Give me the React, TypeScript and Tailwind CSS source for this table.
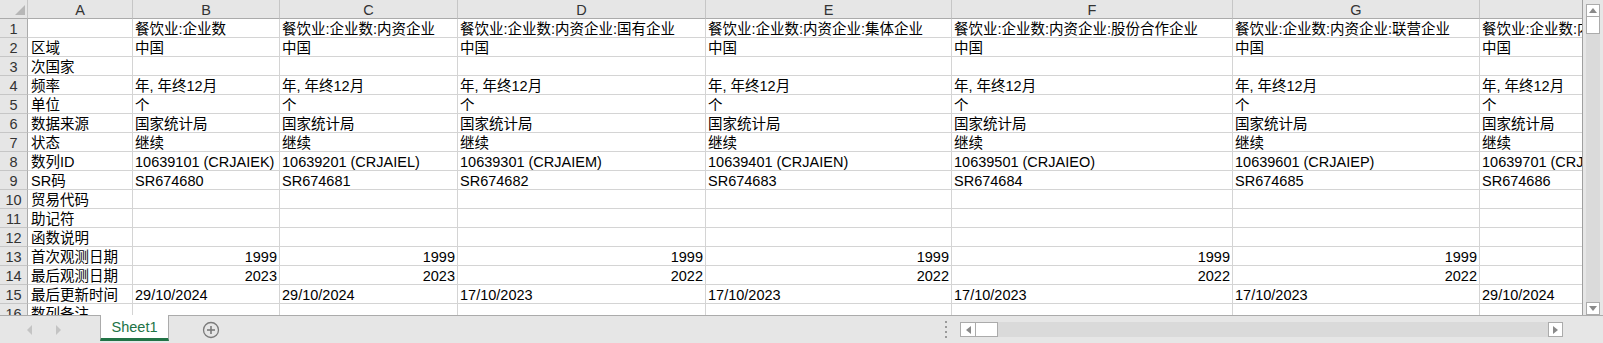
import React from "react";

const widths = [105, 147, 178, 248, 246, 281, 247, 320];
const letters = ["A", "B", "C", "D", "E", "F", "G", "H"];

type Cell = string | { v: string; r: true };

const cols = ["B", "C", "D", "E", "F", "G", "H"];
const names = [
  "餐饮业:企业数",
  "餐饮业:企业数:内资企业",
  "餐饮业:企业数:内资企业:国有企业",
  "餐饮业:企业数:内资企业:集体企业",
  "餐饮业:企业数:内资企业:股份合作企业",
  "餐饮业:企业数:内资企业:联营企业",
  "餐饮业:企业数:内资企业:私营企业",
];
const ids = ["10639101 (CRJAIEK)", "10639201 (CRJAIEL)", "10639301 (CRJAIEM)", "10639401 (CRJAIEN)", "10639501 (CRJAIEO)", "10639601 (CRJAIEP)", "10639701 (CRJAIEQ)"];
const srs = ["SR674680", "SR674681", "SR674682", "SR674683", "SR674684", "SR674685", "SR674686"];
const first = ["1999", "1999", "1999", "1999", "1999", "1999", ""];
const last = ["2023", "2023", "2022", "2022", "2022", "2022", ""];
const upd = ["29/10/2024", "29/10/2024", "17/10/2023", "17/10/2023", "17/10/2023", "17/10/2023", "29/10/2024"];

const rep = (s: string) => cols.map(() => s);

const rows: Cell[][] = [
  ["", ...names],
  ["区域", ...rep("中国")],
  ["次国家", ...rep("")],
  ["频率", ...rep("年, 年终12月")],
  ["单位", ...rep("个")],
  ["数据来源", ...rep("国家统计局")],
  ["状态", ...rep("继续")],
  ["数列ID", ...ids],
  ["SR码", ...srs],
  ["贸易代码", ...rep("")],
  ["助记符", ...rep("")],
  ["函数说明", ...rep("")],
  ["首次观测日期", ...first.map((v) => ({ v, r: true as const }))],
  ["最后观测日期", ...last.map((v) => ({ v, r: true as const }))],
  ["最后更新时间", ...upd],
  ["数列备注", ...rep("")],
];

function Corner() {
  return (
    <div className="w-[28px] h-[19px] shrink-0 border-r border-b border-r-[#c6c6c6] border-b-[#ababab] bg-[#e6e6e6] relative">
      <svg width="28" height="18" className="absolute left-0 top-0">
        <polygon points="25,5 25,15 15,15" fill="#b7b7b7" />
      </svg>
    </div>
  );
}

export default function App() {
  return (
    <div className="w-[1603px] h-[343px] bg-[#e6e6e6] flex flex-col overflow-hidden font-['Liberation_Sans','Noto_Sans_CJK_SC',sans-serif] text-[14.5px] text-black">
      <div className="flex h-[315px]">
        <div className="w-[1583px] h-[315px] overflow-hidden bg-white border-r border-[#9f9f9f] flex flex-col">
          <div className="flex">
            <Corner />
            {letters.map((l, i) => (
              <div
                key={l}
                style={{ width: widths[i] }}
                className="h-[19px] shrink-0 border-r border-b border-r-[#c6c6c6] border-b-[#ababab] bg-[#e6e6e6] text-[#333] leading-[20px] text-center overflow-hidden"
              >
                {l}
              </div>
            ))}
          </div>
          {rows.map((row, ri) => (
            <div key={ri} className="flex">
              <div className="w-[28px] h-[19px] shrink-0 border-r border-b border-r-[#ababab] border-b-[#c6c6c6] bg-[#e6e6e6] text-[#333] leading-[20px] text-center overflow-hidden">
                {ri + 1}
              </div>
              {row.map((c, ci) => {
                const right = typeof c !== "string";
                const v = typeof c === "string" ? c : c.v;
                return (
                  <div
                    key={ci}
                    style={{ width: widths[ci] }}
                    className={
                      "h-[19px] shrink-0 border-r border-b border-[#d4d4d4] leading-[20px] whitespace-nowrap overflow-hidden " +
                      (right ? "text-right pr-[2px]" : ci === 0 ? "pl-[3px]" : "pl-[2px]")
                    }
                  >
                    {v}
                  </div>
                );
              })}
            </div>
          ))}
        </div>
        <div className="w-[20px] h-[315px] flex flex-col items-center pt-[4px] bg-[#e6e6e6]">
          <div className="w-[14px] h-[13px] bg-white border border-[#ababab] flex items-center justify-center">
            <svg width="8" height="5"><polygon points="0,5 8,5 4,0" fill="#8a8a8a" /></svg>
          </div>
          <div className="w-[14px] flex-1 bg-[#dadada] flex flex-col">
            <div className="w-[14px] h-[17px] bg-white border border-t-0 border-[#ababab]" />
            <div className="flex-1" />
          </div>
          <div className="w-[14px] h-[13px] bg-white border border-[#ababab] flex items-center justify-center">
            <svg width="8" height="5"><polygon points="0,0 8,0 4,5" fill="#8a8a8a" /></svg>
          </div>
        </div>
      </div>
      <div className="h-[28px] flex border-t border-[#ababab] bg-[#e6e6e6]">
        <div className="w-[100px] flex items-center">
          <svg width="100" height="26">
            <polygon points="32,8 32,18 27,13" fill="#c4c4c4" />
            <polygon points="56,8 56,18 61,13" fill="#c4c4c4" />
          </svg>
        </div>
        <div className="w-[69px] h-[26px] -mt-px bg-white border-x border-[#ababab] border-b-[3px] border-b-[#217346] text-[#217346] text-center leading-[24px]">
          Sheet1
        </div>
        <div className="w-[84px] flex items-center justify-center">
          <svg width="20" height="20" viewBox="0 0 20 20">
            <circle cx="10" cy="10" r="7.5" fill="none" stroke="#7a7a7a" strokeWidth="1.3" />
            <line x1="10" y1="6" x2="10" y2="14" stroke="#7a7a7a" strokeWidth="1.6" />
            <line x1="6" y1="10" x2="14" y2="10" stroke="#7a7a7a" strokeWidth="1.6" />
          </svg>
        </div>
        <div className="w-[707px] flex items-center justify-end pr-[13px]">
          <div className="flex flex-col gap-[3px]">
            <div className="w-[2px] h-[2px] bg-[#9a9a9a]" />
            <div className="w-[2px] h-[2px] bg-[#9a9a9a]" />
            <div className="w-[2px] h-[2px] bg-[#9a9a9a]" />
            <div className="w-[2px] h-[2px] bg-[#9a9a9a]" />
          </div>
        </div>
        <div className="w-[603px] h-[15px] mt-[6px] bg-[#dadada] flex">
          <div className="w-[16px] h-[15px] bg-white border border-[#ababab] flex items-center justify-center">
            <svg width="5" height="8"><polygon points="5,0 5,8 0,4" fill="#8a8a8a" /></svg>
          </div>
          <div className="w-[22px] h-[15px] bg-white border border-l-0 border-[#ababab]" />
          <div className="flex-1" />
          <div className="w-[15px] h-[15px] bg-white border border-[#ababab] flex items-center justify-center">
            <svg width="5" height="8"><polygon points="0,0 0,8 5,4" fill="#8a8a8a" /></svg>
          </div>
        </div>
      </div>
    </div>
  );
}
